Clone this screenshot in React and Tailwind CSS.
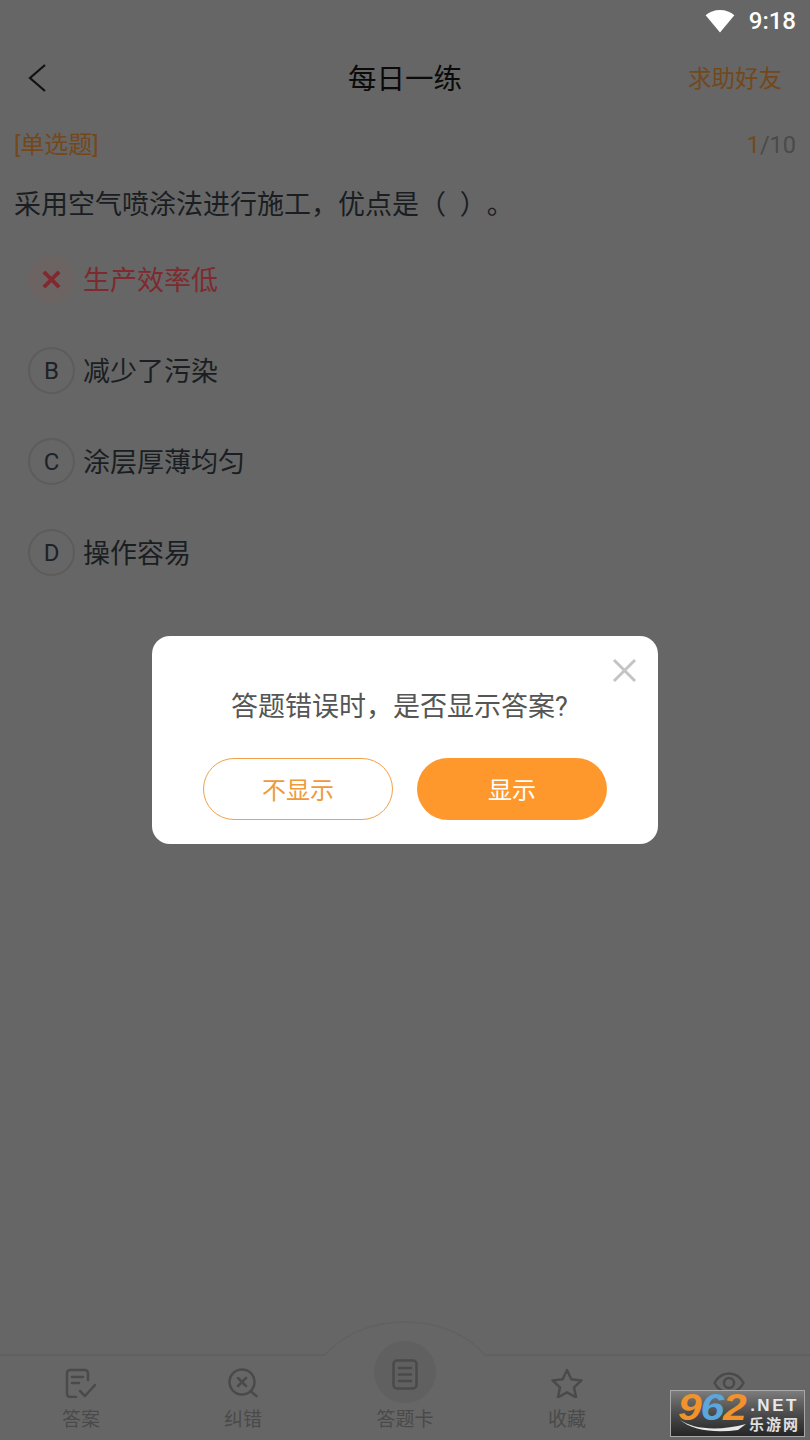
const font = { fontFamily: '"Roboto", "Noto Sans CJK SC", sans-serif' };

function Wifi() {
  return (
    <svg width="30" height="23" viewBox="0 0 31 24" aria-hidden="true">
      <path d="M15.5 23.5 0.5 5.5C4.5 2 9.5 0 15.5 0S26.500 2 30.500 5.500Z" fill="#fff" />
    </svg>
  );
}

function Option({ letter, text, wrong }) {
  return (
    <div className="flex h-[91px] items-center pl-[28px]">
      {wrong ? (
        <div className="flex h-[47px] w-[47px] items-center justify-center rounded-full bg-[#6c6462]">
          <svg width="19" height="19" viewBox="0 0 20 20" aria-hidden="true">
            <path d="M2 2 18 18M18 2 2 18" stroke="#7e2a2f" strokeWidth="4" />
          </svg>
        </div>
      ) : (
        <div className="flex h-[47px] w-[47px] items-center justify-center rounded-full border-2 border-[#5c5c5c] text-[24px] text-[#1e2226]">
          {letter}
        </div>
      )}
      <span className={`ml-[8px] pt-[4px] text-[27px] ${wrong ? "text-[#7e2a2f]" : "text-[#1a1e22]"}`}>{text}</span>
    </div>
  );
}

function NavItem({ label, children }) {
  return (
    <div className="flex flex-1 flex-col items-center">
      <div className="mb-[2px] flex h-[46px] w-[62px] items-center justify-center">{children}</div>
      <span className="relative text-[19px] leading-[24px] text-[#4a4a4a]">{label}</span>
    </div>
  );
}

const stroke = { fill: "none", stroke: "#4a4a4a", strokeWidth: 2.5, strokeLinecap: "round", strokeLinejoin: "round" };

export default function App() {
  return (
    <div className="relative flex h-[1440px] w-[810px] flex-col overflow-hidden bg-[#666666] [text-spacing-trim:space-all]" style={font}>
      <div className="flex h-[40px] items-center justify-end gap-[14px] pr-[14px] pt-[2px]">
        <Wifi />
        <span className="text-[24px] font-medium leading-none text-white">9:18</span>
      </div>

      <header className="relative flex h-[76px] items-center justify-between pl-[28px] pr-[28px]">
        <svg width="18" height="30" viewBox="0 0 18 30" aria-hidden="true">
          <path d="M17 2 2 15 17 28" fill="none" stroke="#111" strokeWidth="2.2" />
        </svg>
        <h1 className="absolute inset-x-0 pt-[4px] text-center text-[28.500px] font-normal text-[#0a0a0a]">每日一练</h1>
        <span className="pt-[4px] text-[23.500px] text-[#74481a]">求助好友</span>
      </header>

      <div className="flex items-center justify-between px-[14px] pt-[11px]">
        <span className="text-[24px] leading-[36px] text-[#74481a]">[单选题]</span>
        <span className="text-[23.500px] leading-[36px] text-[#4a4a4a]">
          <span className="text-[#74481a]">1</span>/10
        </span>
      </div>

      <p className="px-[14px] pt-[21px] text-[27px] leading-[42px] text-[#1a1e22]">采用空气喷涂法进行施工，优点是（{"\u2002"}）。</p>

      <div className="pt-[8px]">
        <Option wrong text="生产效率低" />
        <Option letter="B" text="减少了污染" />
        <Option letter="C" text="涂层厚薄均匀" />
        <Option letter="D" text="操作容易" />
      </div>

      <div className="flex-1" />

      <nav className="relative flex h-[86px] items-start border-t-2 border-[#606060] pt-[4px]">
        <svg className="absolute left-[320px] top-[-36px]" width="170" height="38" viewBox="0 0 170 38" aria-hidden="true">
          <path d="M5 35 C25 12 55 2 85 2 S145 12 165 35 L165 38 L5 38 Z" fill="#666666" />
          <path d="M5 35 C25 12 55 2 85 2 S145 12 165 35" fill="none" stroke="#616161" strokeWidth="1.500" />
        </svg>
        <div className="absolute left-[374px] top-[-15px] h-[62px] w-[62px] rounded-full bg-[#606060]" />
        <NavItem label="答案">
          <svg width="32" height="30" viewBox="0 0 32 30" aria-hidden="true" {...stroke}>
            <path d="M23 12V5a3 3 0 0 0-3-3H5a3 3 0 0 0-3 3v21a3 3 0 0 0 3 3h6" />
            <path d="M7 9h11M7 15h7" />
            <path d="M15 23l5 5 10-11" />
          </svg>
        </NavItem>
        <NavItem label="纠错">
          <svg width="30" height="30" viewBox="0 0 30 30" aria-hidden="true" {...stroke}>
            <circle cx="14" cy="14" r="12.500" />
            <path d="M10 10l8 8M18 10l-8 8M23.500 24l5 4" />
          </svg>
        </NavItem>
        <NavItem label="答题卡">
          <svg width="26" height="31" viewBox="0 0 26 31" aria-hidden="true" className="relative -top-[9px]" {...stroke}>
            <rect x="1.500" y="1.500" width="23" height="28" rx="3.500" />
            <path d="M7 9h12M7 15.500h12M7 22h12" />
          </svg>
        </NavItem>
        <NavItem label="收藏">
          <svg width="32" height="30" viewBox="0 0 32 30" aria-hidden="true" {...stroke}>
            <path d="M16 2l4.300 9.200 10.200 1.200-7.500 6.900 2 10-9-5-9 5 2-10-7.500-6.900 10.200-1.200z" />
          </svg>
        </NavItem>
        <NavItem label="设置">
          <svg width="32" height="22" viewBox="0 0 32 22" aria-hidden="true" {...stroke}>
            <path d="M1.500 11C5 4.500 10 1.500 16 1.500S27 4.500 30.500 11C27 17.500 22 20.500 16 20.500S5 17.500 1.500 11Z" />
            <circle cx="16" cy="11" r="5" />
          </svg>
        </NavItem>
      </nav>

      <div className="absolute inset-0 flex items-center justify-center pt-[40px]">
        <div className="relative h-[208px] w-[506px] rounded-[18px] bg-white">
          <svg className="absolute right-[21px] top-[22px]" width="25" height="25" viewBox="0 0 25 25" aria-hidden="true">
            <path d="M2 2 23 23M23 2 2 23" stroke="#c4c4c4" strokeWidth="3" />
          </svg>
          <p className="pr-[11px] pt-[51px] text-center text-[27px] leading-[40px] text-[#555555]">答题错误时，是否显示答案?</p>
          <div className="mt-[31px] flex justify-center gap-[24px]">
            <button className="h-[62px] w-[190px] rounded-full border border-[#f0a24a] pt-[3px] text-[24px] text-[#ef9a3a]">不显示</button>
            <button className="h-[62px] w-[190px] rounded-full bg-[#fe982c] pt-[3px] text-[24px] text-white">显示</button>
          </div>
        </div>
      </div>

      <div className="absolute bottom-[3px] left-[670px] flex h-[47px] w-[135px] items-start border border-[#a8a8a8] bg-gradient-to-b from-[#7c7c7c] via-[#4c4c4c] to-[#262626] pl-[7px]">
        <span className="w-[72px] origin-left scale-x-[1.15] text-[37px] font-bold italic leading-[34px] tracking-[-1px] text-[#f0932c]" style={{ fontFamily: '"Liberation Sans", sans-serif' }}>
          9<span className="text-[#5ba6dc]">6</span>2
        </span>
        <div className="ml-[-1px] flex flex-col items-center pt-[6px] text-white" style={{ fontFamily: '"Liberation Sans", "Noto Sans CJK SC", sans-serif' }}>
          <span className="text-[17px] font-bold leading-[18px] tracking-[2.500px] text-[#e8e8e8]">.NET</span>
          <span className="text-[15px] font-bold leading-[20px] tracking-[2px] text-[#e0e0e0]">乐游网</span>
        </div>
        <svg className="absolute bottom-[3px] left-[7px]" width="70" height="16" viewBox="0 0 70 16" aria-hidden="true">
          <path d="M1 2C15 13 42 14 68 7L60 13C38 16 14 14 1 2Z" fill="#e8e8e8" />
        </svg>
      </div>
    </div>
  );
}
